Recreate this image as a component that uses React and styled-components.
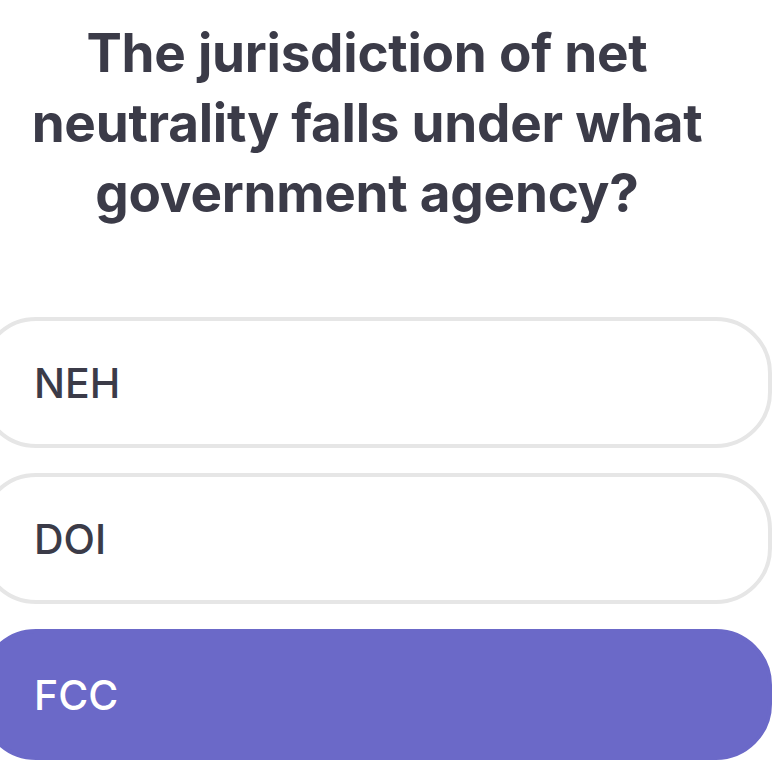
import styled, { createGlobalStyle } from "styled-components";

const GlobalStyle = createGlobalStyle`
  html, body {
    margin: 0;
    padding: 0;
    background: #ffffff;
    overflow: hidden;
  }
  body {
    font-family: "Inter", "Liberation Sans", sans-serif;
  }
`;

const answers = [
  { id: 1, label: "NEH" },
  { id: 2, label: "DOI" },
  { id: 3, label: "FCC", selected: true },
];

export default function App() {
  return (
    <>
      <GlobalStyle />
      <Screen>
        <Question>
          The jurisdiction of net
          <br />
          neutrality falls under what
          <br />
          government agency?
        </Question>
        <AnswerList>
          {answers.map((answer) => (
            <Answer key={answer.id} $selected={answer.selected}>
              {answer.label}
            </Answer>
          ))}
        </AnswerList>
      </Screen>
    </>
  );
}

const Screen = styled.div`
  width: 784px;
  height: 778px;
  display: flex;
  flex-direction: column;
  overflow: hidden;
`;

const Question = styled.h1`
  box-sizing: border-box;
  margin: 18px 0 0 0;
  width: 784px;
  padding-right: 50px;
  text-align: center;
  font-family: "Inter", "Liberation Sans", sans-serif;
  font-weight: 700;
  font-size: 53px;
  line-height: 70px;
  letter-spacing: -0.25px;
  color: #3b3b48;
`;

const AnswerList = styled.div`
  margin-top: 89px;
  margin-left: -20px;
  display: flex;
  flex-direction: column;
  gap: 25px;
`;

const Answer = styled.div`
  box-sizing: border-box;
  width: 792px;
  height: 131px;
  display: flex;
  align-items: center;
  padding-left: 50px;
  border-radius: 56px;
  border: 4px solid ${({ $selected }) => ($selected ? "#6b69c8" : "#e6e6e6")};
  background: ${({ $selected }) => ($selected ? "#6b69c8" : "#ffffff")};
  color: ${({ $selected }) => ($selected ? "#ffffff" : "#3b3b48")};
  font-family: "Inter", "Liberation Sans", sans-serif;
  font-weight: 500;
  font-size: 41px;
`;
